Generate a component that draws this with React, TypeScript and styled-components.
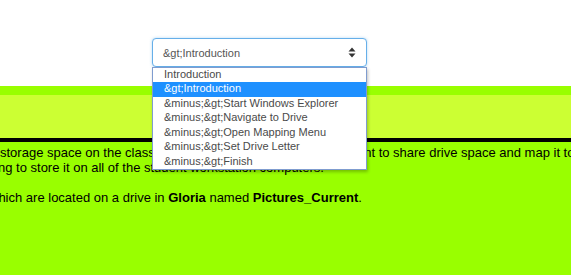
import React from 'react';
import styled, { createGlobalStyle } from 'styled-components';

const GlobalStyle = createGlobalStyle`
  html, body {
    margin: 0;
    padding: 0;
    font-family: "Liberation Sans", Arial, sans-serif;
  }
`;

const Page = styled.div`
  min-height: 100vh;
  background: #99ff00;
  overflow: hidden;
`;

const TopBar = styled.div`
  height: 86px;
  box-sizing: border-box;
  background: #ffffff;
  padding: 38px 0 0 152px;
`;

const SelectWrap = styled.div`
  position: relative;
  width: 215px;
  z-index: 10;
`;

const SelectBox = styled.div`
  height: 29px;
  box-sizing: border-box;
  display: flex;
  align-items: center;
  justify-content: space-between;
  padding: 0 10px 0 10px;
  border: 1px solid #66afe9;
  border-radius: 4px;
  background: #ffffff;
  box-shadow: 0 0 3px rgba(102, 175, 233, 0.5);
  font-size: 11px;
  color: #555555;
`;

const Options = styled.ul`
  position: absolute;
  top: 29px;
  left: 0;
  width: 215px;
  box-sizing: border-box;
  margin: 0;
  padding: 0;
  list-style: none;
  background: #ffffff;
  border: 1px solid #7f9ccf;
  box-shadow: 1px 2px 3px rgba(0, 0, 0, 0.25);
`;

const Option = styled.li<{ $active?: boolean }>`
  height: 14.43px;
  line-height: 13.6px;
  padding-left: 11px;
  font-size: 11px;
  white-space: nowrap;
  color: ${p => (p.$active ? '#ffffff' : '#4a4a4a')};
  background: ${p => (p.$active ? '#1e90ff' : 'transparent')};
`;

const Band = styled.div`
  margin-top: 9px;
  height: 43px;
  background: #ccff33;
  border-bottom: 4px solid #000000;
`;

const Content = styled.div`
  padding-top: 3px;
  font-size: 13px;
  line-height: 15px;
  color: #000000;
`;

const Line = styled.div<{ $shift: number }>`
  white-space: nowrap;
  margin-left: ${p => -p.$shift}px;
`;

const Gap = styled.div`
  height: 15px;
`;

const Arrows = () => (
  <svg width="8" height="11" viewBox="0 0 8 11">
    <path d="M4 0.5 L7.5 4.5 L0.5 4.5 Z" fill="#333" />
    <path d="M4 10.5 L7.5 6.5 L0.5 6.5 Z" fill="#333" />
  </svg>
);

const items = [
  'Introduction',
  '&gt;Introduction',
  '&minus;&gt;Start Windows Explorer',
  '&minus;&gt;Navigate to Drive',
  '&minus;&gt;Open Mapping Menu',
  '&minus;&gt;Set Drive Letter',
  '&minus;&gt;Finish',
];

export default function App() {
  return (
    <Page>
      <GlobalStyle />
      <TopBar>
        <SelectWrap>
          <SelectBox>
            <span>&amp;gt;Introduction</span>
            <Arrows />
          </SelectBox>
          <Options>
            {items.map((it, i) => (
              <Option key={i} $active={i === 1}>{it}</Option>
            ))}
          </Options>
        </SelectWrap>
      </TopBar>
      <Band />
      <Content>
        <Line $shift={0}>
          storage space on the classroom server so ask for the department to share drive space and map it to
        </Line>
        <Line $shift={2}>ng to store it on all of the student workstation computers.</Line>
        <Gap />
        <Line $shift={11}>
          which are located on a drive in <b>Gloria</b> named <b>Pictures_Current</b>.
        </Line>
      </Content>
    </Page>
  );
}
